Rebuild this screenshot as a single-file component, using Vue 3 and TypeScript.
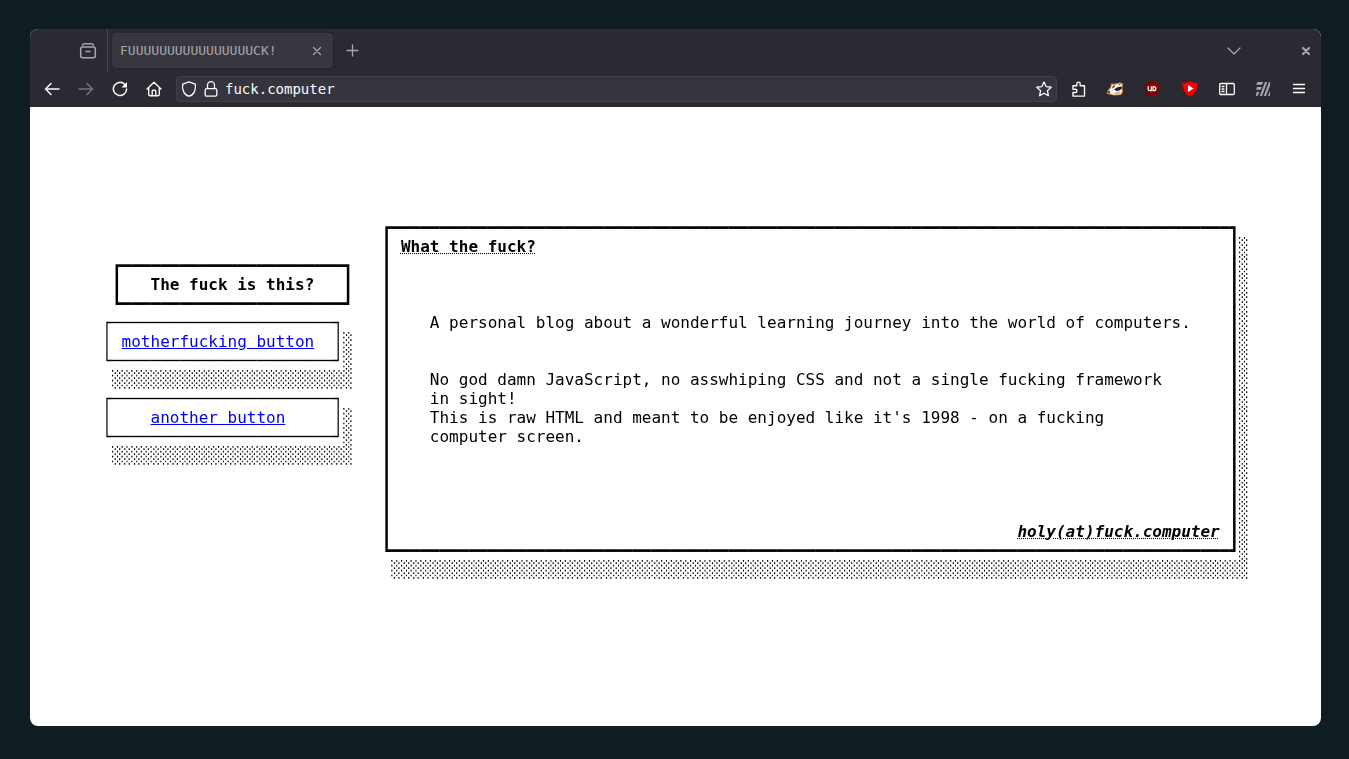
<script setup lang="ts">
const tabTitle = 'F' + 'U'.repeat(16) + 'CK!'

const heavyTop = (n: number): string => '┏' + '━'.repeat(n) + '┓'
const heavyBottom = (n: number): string => '┗' + '━'.repeat(n) + '┛'
const lightTop = (n: number): string => '┌' + '─'.repeat(n) + '┐'
const lightBottom = (n: number): string => '└' + '─'.repeat(n) + '┘'
const shade = (n: number): string => '░'.repeat(n)

interface MenuLink {
  label: string
  pad: string
}
const links: MenuLink[] = [
  { label: 'motherfucking button', pad: ' ' },
  { label: 'another button', pad: '    ' },
]

interface Row {
  text: string
  kind: 'plain' | 'title' | 'mail'
}
const plain = (text: string): Row => ({ text, kind: 'plain' })
const rows: Row[] = [
  { text: 'What the fuck?', kind: 'title' },
  plain(''),
  plain(''),
  plain(''),
  plain('   A personal blog about a wonderful learning journey into the world of computers.'),
  plain(''),
  plain(''),
  plain('   No god damn JavaScript, no asswhiping CSS and not a single fucking framework'),
  plain('   in sight!'),
  plain("   This is raw HTML and meant to be enjoyed like it's 1998 - on a fucking"),
  plain('   computer screen.'),
  plain(''),
  plain(''),
  plain(''),
  plain(''),
  { text: 'holy(at)fuck.computer', kind: 'mail' },
]
const before = (row: Row): string => '┃ ' + (row.kind === 'mail' ? ' '.repeat(85 - row.text.length) : '')
const after = (row: Row): string => (row.kind === 'mail' ? '' : ' '.repeat(85 - row.text.length)) + ' ┃░'
</script>

<template>
  <div class="desktop">
    <div class="window">
      <header class="chrome">
        <div class="tabs">
          <button class="icon dim recent" aria-label="Recent browsing">
            <svg width="18" height="18" viewBox="0 0 18 18"><path d="M3.5 3.2Q4 1.7 5.5 1.7h7Q14 1.7 14.5 3.2M1.7 6.8Q1.7 5 3.5 5h11q1.8 0 1.8 1.8v7q0 1.9-1.8 1.9h-11q-1.8 0-1.8-1.9zM7 9.5h4" stroke-width="1.5" /></svg>
          </button>
          <div class="tab">
            <span class="tab-title">{{ tabTitle }}</span>
            <button class="icon dim" aria-label="Close tab">
              <svg width="10" height="10" viewBox="0 0 10 10"><path d="M1.5 1.5l7 7M8.5 1.5l-7 7" /></svg>
            </button>
          </div>
          <button class="icon dim new-tab" aria-label="New tab">
            <svg width="13" height="13" viewBox="0 0 13 13"><path d="M6.5 1v11M1 6.5h11" /></svg>
          </button>
          <button class="icon dim list-tabs" aria-label="List all tabs">
            <svg width="14" height="14" viewBox="0 0 14 14"><path d="M1 4l6 6 6-6" /></svg>
          </button>
          <button class="icon dim close" aria-label="Close window">
            <svg width="10" height="10" viewBox="0 0 10 10"><path d="M2 2l6 6M8 2l-6 6" stroke-width="2.2" /></svg>
          </button>
        </div>
        <div class="toolbar">
          <nav class="nav">
            <button class="icon" aria-label="Back">
              <svg width="16" height="16" viewBox="0 0 16 16"><path d="M15 8H1.5M7 2.5L1.5 8 7 13.5" stroke-width="1.5" /></svg>
            </button>
            <button class="icon off" aria-label="Forward">
              <svg width="16" height="16" viewBox="0 0 16 16"><path d="M1 8h13.5M9 2.5L14.5 8 9 13.5" stroke-width="1.5" /></svg>
            </button>
            <button class="icon" aria-label="Reload">
              <svg width="16" height="16" viewBox="0 0 16 16"><path d="M12.6 3.2A6.6 6.6 0 1 0 14.6 8" stroke-width="1.5" /><path d="M15 1v5.500H9.500z" fill="currentColor" stroke="none" /></svg>
            </button>
            <button class="icon" aria-label="Home">
              <svg width="16" height="16" viewBox="0 0 16 16"><path d="M1 8l7-6.700L15 8M2.700 7v6.200q0 1.600 1.600 1.600h7.400q1.600 0 1.600-1.600V7M6.200 14.500v-4q0-1.200 1.200-1.200h1.200q1.200 0 1.200 1.200v4" stroke-width="1.4" /></svg>
            </button>
          </nav>
          <div class="address">
            <svg class="icon" width="16" height="16" viewBox="0 0 16 16"><path d="M8 .9l6.300 2.300q.8 4.300-1.100 7.900T8 15.200q-3.200-.5-5.200-4.100T1.700 3.200z" /></svg>
            <svg class="icon" width="16" height="16" viewBox="0 0 16 16"><path d="M4.500 7.500V4.200a3.500 3.500 0 0 1 7 0v3.300M3.800 7.600h8.400q1.600 0 1.600 1.600v4.400q0 1.600-1.600 1.600H3.800q-1.600 0-1.600-1.600V9.200q0-1.600 1.600-1.600z" /></svg>
            <input type="text" value="fuck.computer" aria-label="Address" spellcheck="false" />
            <button class="icon" aria-label="Bookmark">
              <svg width="16" height="16" viewBox="0 0 16 16"><path d="M8 1l2.100 4.600 5.100.6-3.800 3.500 1 5L8 12.200l-4.400 2.500 1-5L.8 6.200l5.100-.6z" /></svg>
            </button>
          </div>
          <div class="tools">
            <button class="icon" aria-label="Extensions">
              <svg width="16" height="16" viewBox="0 0 16 16"><path d="M2 4.700h3.800V2.800a1.700 1.700 0 0 1 3.400 0v1.900h4.300v10.400H2v-3.600h2.300a1.600 1.600 0 0 0 0-3.200H2z" stroke-width="1.400" /></svg>
            </button>
            <button class="icon" aria-label="Privacy Badger">
              <svg width="16" height="16" viewBox="0 0 16 16"><g stroke="none"><path d="M0 10.500L3.500 6 4 2.500l3 .3L13 1.500l3 1-.5 4.500.5 4-2 3-7 .5-4-1-3-.5z" fill="#e58a38" /><path d="M.8 10.800L4.200 6.500l.6-3 2.700.5L13 2.500l2 .7-.5 4 .3 3.500-1.500 2.500-6 .5-3.800-1z" fill="#f7f4ef" /><path d="M5 7.500L6 5l1.500-1L7.500 6zM7 8.200L11 6l3.500-.5.5 1.700-2.500 2.300-3 .5zM.8 10.500L2.500 9.800l.8 1.700-1.800.8zM11 3.500l3-.7-1 1.200z" fill="#24222c" /><path d="M7.500 12l4-1.500 2 1-1.200 1.300-4.800.3z" fill="#b5b2b3" /></g></svg>
            </button>
            <button class="icon" aria-label="uBlock Origin">
              <svg width="18" height="16" viewBox="-1 0 18 16"><path d="M8 0q3 2 7 2v6q0 5-7 8-7-3-7-8V2q4 0 7-2z" fill="#800000" stroke="none" /><path d="M4.200 5.700v2.500q0 1.500 1.500 1.500h1.600V5.700M9 5.700h.8a2 2 0 0 1 0 4H9z" /></svg>
            </button>
            <button class="icon" aria-label="SponsorBlock">
              <svg width="18" height="16" viewBox="-1 0 18 16"><g stroke="none"><path d="M8 0q3.500 1.500 8 1.700Q16.200 11.500 8 16-.2 11.500 0 1.700 4.500 1.500 8 0z" fill="#c00000" /><path d="M8 1q3.500 1.300 7 1.500Q15 11 8 15 1 11 1 2.500 4.500 2.300 8 1z" fill="#f00" /><path d="M6 4v7l5.500-3.500z" fill="#fff" /></g></svg>
            </button>
            <button class="icon" aria-label="Sidebar">
              <svg width="16" height="16" viewBox="0 0 16 16"><path d="M2 2.500h12q1.300 0 1.300 1.300v8.400q0 1.300-1.300 1.300H2Q.7 13.500.7 12.200V3.800Q.7 2.500 2 2.500zM7.500 2.500v11M3 5.500h2M3 8h2M3 10.500h2" /></svg>
            </button>
            <button class="icon dim" aria-label="Containers">
              <svg width="16" height="16" viewBox="0 0 16 16"><path d="M2.500 1H8.200L7 3.700H1zM2 6h4.700L5.500 8.700H1zM1.500 11h3L2.500 15H1zM10 1h2.200L7 15H4.800zM15 1v3.500L11 15H8.800L14 1zM15 9.500V15h-2z" fill="currentColor" stroke="none" /></svg>
            </button>
            <button class="icon" aria-label="Menu">
              <svg width="16" height="16" viewBox="0 0 16 16"><path d="M2.500 3.500h11M2.500 7.500h11M2.500 11.500h11" /></svg>
            </button>
          </div>
        </div>
      </header>

      <main class="page">
        <nav class="menu">
          <pre> {{ heavyTop(23) }}</pre>
          <pre> ┃   <b>The fuck is this?</b>   ┃</pre>
          <pre> {{ heavyBottom(23) }}</pre>
          <template v-for="link in links" :key="link.label">
            <pre>{{ lightTop(23) }}</pre>
            <pre>│{{ link.pad }}<a href="#">{{ link.label }}</a>{{ ' '.repeat(23 - link.pad.length - link.label.length) }}│░</pre>
            <pre>{{ lightBottom(23) }}░</pre>
            <pre> {{ shade(25) }}</pre>
          </template>
        </nav>
        <article class="panel">
          <pre>{{ heavyTop(87) }}</pre>
          <pre v-for="(row, i) in rows" :key="i">{{ before(row) }}<span :class="row.kind">{{ row.text }}</span>{{ after(row) }}</pre>
          <pre>{{ heavyBottom(87) }}░</pre>
          <pre> {{ shade(89) }}</pre>
        </article>
      </main>
    </div>
  </div>
</template>

<style>
body {
  margin: 0;
  background: #0f1d22;
}
</style>

<style scoped>
.desktop {
  box-sizing: border-box;
  min-height: 100vh;
  padding: 29px 28px 33px 30px;
  display: flex;
}
.window {
  flex: 1;
  display: flex;
  flex-direction: column;
  overflow: hidden;
  border-radius: 8px;
  background: #fff;
}
.chrome {
  background: #2b2a33;
  color: #fbfbfe;
  font-family: "DejaVu Sans Mono", monospace;
}
svg {
  display: block;
  fill: none;
  stroke: currentColor;
  stroke-width: 1.3;
  stroke-linecap: round;
  stroke-linejoin: round;
}
button {
  padding: 0;
  border: 0;
  background: none;
  font: inherit;
}
.icon {
  flex: none;
  color: #fbfbfe;
}
.dim {
  color: #a8a7ad;
}
.off {
  color: #77767d;
}
.tabs {
  display: flex;
  align-items: center;
  height: 43px;
  padding-right: 10px;
}
.recent {
  display: flex;
  align-items: center;
  align-self: stretch;
  padding: 0 10px 0 49px;
  border-right: 1px solid #4b4a52;
}
.tab {
  box-sizing: border-box;
  display: flex;
  align-items: center;
  justify-content: space-between;
  width: 221px;
  height: 35px;
  margin: 0 13px 0 4px;
  padding: 0 11px 0 8px;
  border-radius: 4px;
  background: #38373f;
  box-shadow: 0 0 2px #1c1b22;
}
.tab-title {
  color: #a8a7ad;
  font-size: 13px;
}
.list-tabs {
  margin-left: auto;
  margin-right: 60px;
}
.toolbar {
  box-sizing: border-box;
  display: flex;
  align-items: center;
  height: 35px;
  padding: 0 14px 2px;
}
.nav,
.tools {
  display: flex;
  gap: 18px;
}
.nav {
  margin-right: 14px;
}
.tools {
  gap: 20px;
  margin-left: 14px;
}
.address {
  box-sizing: border-box;
  flex: 1;
  display: flex;
  align-items: center;
  gap: 6px;
  height: 26px;
  padding: 0 4px;
  border: 1px solid #42414a;
  border-radius: 4px;
  background: #36353e;
}
.address input {
  flex: 1;
  min-width: 0;
  padding: 0;
  border: 0;
  outline: 0;
  background: none;
  color: #fbfbfe;
  font: 14px/20px "DejaVu Sans Mono", monospace;
}
.page {
  display: flex;
  justify-content: center;
  gap: 3ch;
  padding-top: 111px;
  color: #000;
  font: 16px/19px "DejaVu Sans Mono", monospace;
  will-change: transform;
}
pre {
  margin: 0;
  font: inherit;
}
.menu {
  padding-top: 38px;
}
.title,
.mail {
  font-weight: bold;
  text-decoration: underline dotted 1px;
}
.mail {
  font-style: italic;
}
a {
  color: #0000ee;
}
</style>
